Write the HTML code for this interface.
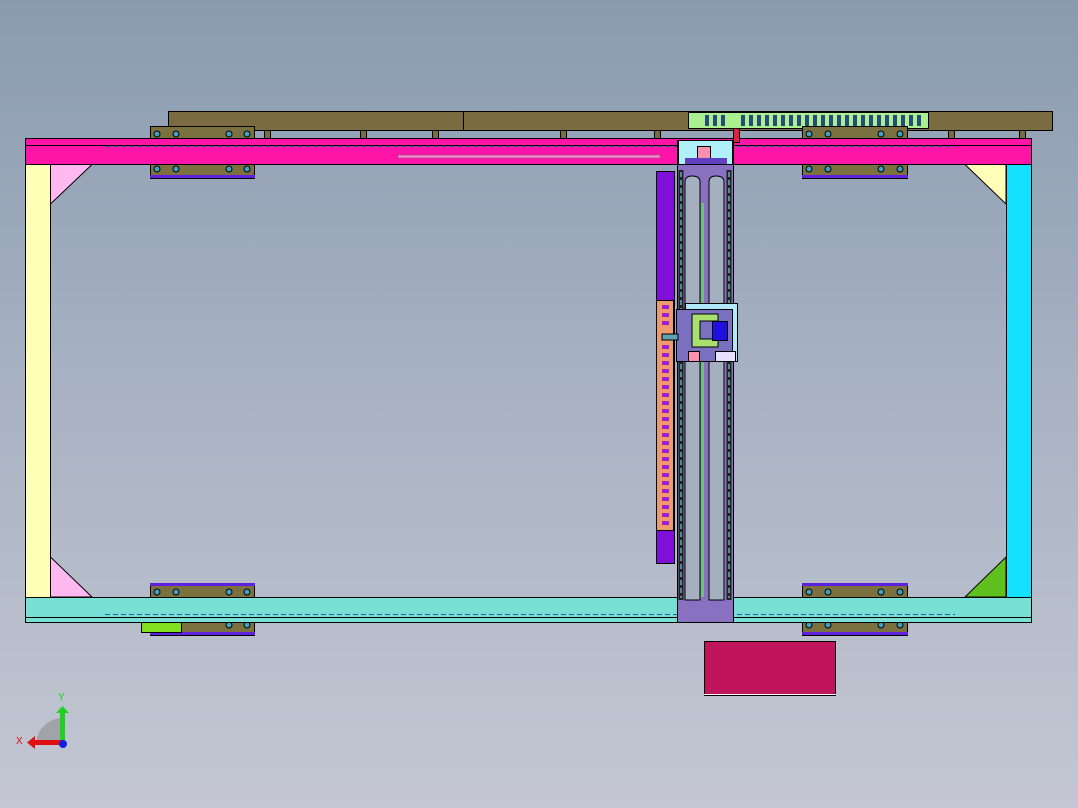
<!DOCTYPE html>
<html><head><meta charset="utf-8"><style>
html,body{margin:0;padding:0;width:1078px;height:808px;overflow:hidden}
body{background:linear-gradient(#8a9bb0 0%,#a9b3c3 50%,#c4c7d3 100%);font-family:"Liberation Sans",sans-serif}
svg{position:absolute;left:0;top:0}
</style></head><body>
<svg width="1078" height="808" viewBox="0 0 1078 808" stroke="#000" stroke-width="1">
<!-- top olive bar -->
<rect x="168.5" y="111.5" width="884" height="19" fill="#7a6c40"/>
<line x1="463.5" y1="111" x2="463.5" y2="130"/>
<rect x="688.5" y="112.5" width="240" height="16" fill="#a8f090"/>
<g fill="#225580" stroke="none">
<script></script>
</g>
<g id="links" stroke="none" fill="#2a4870"></g>
<!-- legs -->
<g fill="#7a6c40">
<rect x="194.5" y="130.5" width="6" height="8"/><rect x="264.5" y="130.5" width="6" height="8"/><rect x="360.5" y="130.5" width="6" height="8"/><rect x="432.5" y="130.5" width="6" height="8"/><rect x="560.5" y="130.5" width="6" height="8"/><rect x="654.5" y="130.5" width="6" height="8"/><rect x="948.5" y="130.5" width="6" height="8"/><rect x="1019.5" y="130.5" width="6" height="8"/>
</g>
<!-- top plates -->
<rect x="150.5" y="126.5" width="104" height="52" fill="#7a7040"/>
<rect x="802.5" y="126.5" width="105" height="52" fill="#7a7040"/>
<!-- top beam -->
<rect x="25.5" y="138.5" width="1006" height="26" fill="#ff14a8"/>
<line x1="25" y1="145.5" x2="1031" y2="145.5"/>
<line x1="105" y1="146.5" x2="955" y2="146.5" stroke="#2a5aa0" stroke-dasharray="5,3"/>
<rect x="398" y="155" width="262" height="3" fill="#ff80d0" stroke="#666" stroke-width=".5"/>
<rect x="150" y="175" width="105" height="3" fill="#6020e0" stroke="none"/>
<rect x="802" y="175" width="106" height="3" fill="#6020e0" stroke="none"/>
<g fill="#40a0c0">
<circle cx="157" cy="134" r="3"/><circle cx="176" cy="134" r="3"/><circle cx="229" cy="134" r="3"/><circle cx="247" cy="134" r="3"/>
<circle cx="157" cy="169" r="3"/><circle cx="176" cy="169" r="3"/><circle cx="229" cy="169" r="3"/><circle cx="247" cy="169" r="3"/>
<circle cx="809" cy="134" r="3"/><circle cx="828" cy="134" r="3"/><circle cx="881" cy="134" r="3"/><circle cx="900" cy="134" r="3"/>
<circle cx="809" cy="169" r="3"/><circle cx="828" cy="169" r="3"/><circle cx="881" cy="169" r="3"/><circle cx="900" cy="169" r="3"/>
</g>
<!-- posts -->
<rect x="25.5" y="164.5" width="25" height="433" fill="#ffffb8"/>
<rect x="1006.5" y="164.5" width="25" height="433" fill="#14e0ff"/>
<polygon points="50.5,164.5 92,164.5 50.5,204" fill="#ffb8f0"/>
<polygon points="1006,164.5 965,164.5 1006,204" fill="#ffffb8"/>
<polygon points="50.5,597 92,597 50.5,557" fill="#ffb8f0"/>
<polygon points="1006,597 965,597 1006,557" fill="#60c020"/>
<!-- bottom plates -->
<rect x="150.5" y="583.5" width="104" height="52" fill="#7a7040"/>
<rect x="802.5" y="583.5" width="105" height="52" fill="#7a7040"/>
<rect x="150" y="583" width="105" height="3" fill="#6020e0" stroke="none"/>
<rect x="150" y="632" width="105" height="3" fill="#6020e0" stroke="none"/>
<rect x="802" y="583" width="106" height="3" fill="#6020e0" stroke="none"/>
<rect x="802" y="632" width="106" height="3" fill="#6020e0" stroke="none"/>
<g fill="#40a0c0">
<circle cx="157" cy="592" r="3"/><circle cx="176" cy="592" r="3"/><circle cx="229" cy="592" r="3"/><circle cx="247" cy="592" r="3"/>
<circle cx="229" cy="625" r="3"/><circle cx="247" cy="625" r="3"/>
<circle cx="809" cy="592" r="3"/><circle cx="828" cy="592" r="3"/><circle cx="881" cy="592" r="3"/><circle cx="900" cy="592" r="3"/>
<circle cx="809" cy="625" r="3"/><circle cx="828" cy="625" r="3"/><circle cx="881" cy="625" r="3"/><circle cx="900" cy="625" r="3"/>
</g>
<rect x="141.5" y="622.5" width="40" height="10" fill="#80e020"/>
<!-- bottom beam -->
<rect x="25.5" y="597.5" width="1006" height="25" fill="#78e0d4"/>
<line x1="25" y1="617.5" x2="1031" y2="617.5"/>
<line x1="105" y1="614.5" x2="955" y2="614.5" stroke="#2a5aa0" stroke-dasharray="5,3"/>
<!-- purple side bar -->
<rect x="656.5" y="171.5" width="18" height="392" fill="#8010d8"/>
<rect x="656.5" y="300.5" width="17" height="230" fill="#f09a70"/>
<g fill="#a020c0" stroke="none" id="ob"></g>
<!-- carriage -->
<rect x="677.5" y="140.5" width="56" height="482" fill="#8a70c0"/>
<path d="M685 600 V182 Q685 176 692 176 Q700 176 700 182 V600 Z M709 600 V182 Q709 176 716 176 Q724 176 724 182 V600 Z" fill="#a4b0c0" stroke="#000"/>
<line x1="702.5" y1="203" x2="702.5" y2="597" stroke="#70c080" stroke-width="3"/>
<rect x="678.5" y="170" width="5" height="430" fill="#222" stroke="none"/>
<rect x="726.5" y="170" width="5" height="430" fill="#222" stroke="none"/>
<line x1="681" y1="172" x2="681" y2="598" stroke="#7ff" stroke-dasharray="5,3"/>
<line x1="729" y1="172" x2="729" y2="598" stroke="#7ff" stroke-dasharray="5,3"/>
<rect x="678.5" y="140.5" width="54" height="24" fill="#b0f0f8"/>
<rect x="697.5" y="146.5" width="13" height="12" fill="#ff90b0"/>
<rect x="685" y="158" width="42" height="6" fill="#6040c0" stroke="none"/>
<rect x="733.5" y="128.5" width="6" height="14" fill="#e02040"/>
<!-- head -->
<rect x="685.5" y="303.5" width="52" height="58" fill="#b0e8f8"/>
<rect x="676.5" y="309.5" width="56" height="52" fill="#7a70c0"/>
<path d="M692 314 H718 V321 H700 V339 H718 V347 H692 Z" fill="#a8e070"/>
<rect x="712.5" y="321.5" width="15" height="19" fill="#2010e0"/>
<rect x="688.5" y="351.5" width="11" height="10" fill="#ff90b0"/>
<rect x="715.5" y="351.5" width="20" height="10" fill="#e8e0ff"/>
<rect x="662" y="334" width="16" height="6" fill="#60a0b0"/>
<!-- magenta box -->
<rect x="704.5" y="641.5" width="131" height="54" fill="#c0145c"/>
<line x1="704" y1="694.5" x2="836" y2="694.5" stroke="#fff"/>
<!-- axis triad -->
<path d="M36 744 A27 27 0 0 1 62 718 V744 Z" fill="#888" stroke="none" opacity=".55"/>
<rect x="60" y="712" width="5" height="32" fill="#20d020" stroke="none"/>
<polygon points="56,713 62.5,706 69,713" fill="#20d020" stroke="none"/>
<rect x="34" y="740" width="28" height="5" fill="#e01010" stroke="none"/>
<polygon points="35,736 27,742.5 35,749" fill="#e01010" stroke="none"/>
<circle cx="63" cy="744" r="4" fill="#1020e0" stroke="none"/>
<text x="58" y="700" font-size="10" fill="#20d020" stroke="none" font-family="Liberation Sans, sans-serif">Y</text>
<text x="16" y="744" font-size="10" fill="#e01010" stroke="none" font-family="Liberation Sans, sans-serif">X</text>
</svg>
<svg width="1078" height="808" style="pointer-events:none">
<g fill="#2a4a78">
<rect x="705" y="115" width="4" height="11"/><rect x="713" y="115" width="4" height="11"/><rect x="721" y="115" width="4" height="11"/><rect x="741" y="115" width="4" height="11"/><rect x="749" y="115" width="4" height="11"/><rect x="757" y="115" width="4" height="11"/><rect x="765" y="115" width="4" height="11"/><rect x="773" y="115" width="4" height="11"/><rect x="781" y="115" width="4" height="11"/><rect x="789" y="115" width="4" height="11"/><rect x="797" y="115" width="4" height="11"/><rect x="805" y="115" width="4" height="11"/><rect x="813" y="115" width="4" height="11"/><rect x="821" y="115" width="4" height="11"/><rect x="829" y="115" width="4" height="11"/><rect x="837" y="115" width="4" height="11"/><rect x="845" y="115" width="4" height="11"/><rect x="853" y="115" width="4" height="11"/><rect x="861" y="115" width="4" height="11"/><rect x="869" y="115" width="4" height="11"/><rect x="877" y="115" width="4" height="11"/><rect x="885" y="115" width="4" height="11"/><rect x="893" y="115" width="4" height="11"/><rect x="901" y="115" width="4" height="11"/><rect x="909" y="115" width="4" height="11"/><rect x="917" y="115" width="4" height="11"/>
</g>
<g fill="#a020d0">
<rect x="662" y="305" width="7" height="4"/><rect x="662" y="313" width="7" height="4"/><rect x="662" y="321" width="7" height="4"/><rect x="662" y="345" width="7" height="4"/><rect x="662" y="353" width="7" height="4"/><rect x="662" y="361" width="7" height="4"/><rect x="662" y="369" width="7" height="4"/><rect x="662" y="377" width="7" height="4"/><rect x="662" y="385" width="7" height="4"/><rect x="662" y="393" width="7" height="4"/><rect x="662" y="401" width="7" height="4"/><rect x="662" y="409" width="7" height="4"/><rect x="662" y="417" width="7" height="4"/><rect x="662" y="425" width="7" height="4"/><rect x="662" y="433" width="7" height="4"/><rect x="662" y="441" width="7" height="4"/><rect x="662" y="449" width="7" height="4"/><rect x="662" y="457" width="7" height="4"/><rect x="662" y="465" width="7" height="4"/><rect x="662" y="473" width="7" height="4"/><rect x="662" y="481" width="7" height="4"/><rect x="662" y="489" width="7" height="4"/><rect x="662" y="497" width="7" height="4"/><rect x="662" y="505" width="7" height="4"/><rect x="662" y="513" width="7" height="4"/><rect x="662" y="521" width="7" height="4"/>
</g>
</svg>
</body></html>
